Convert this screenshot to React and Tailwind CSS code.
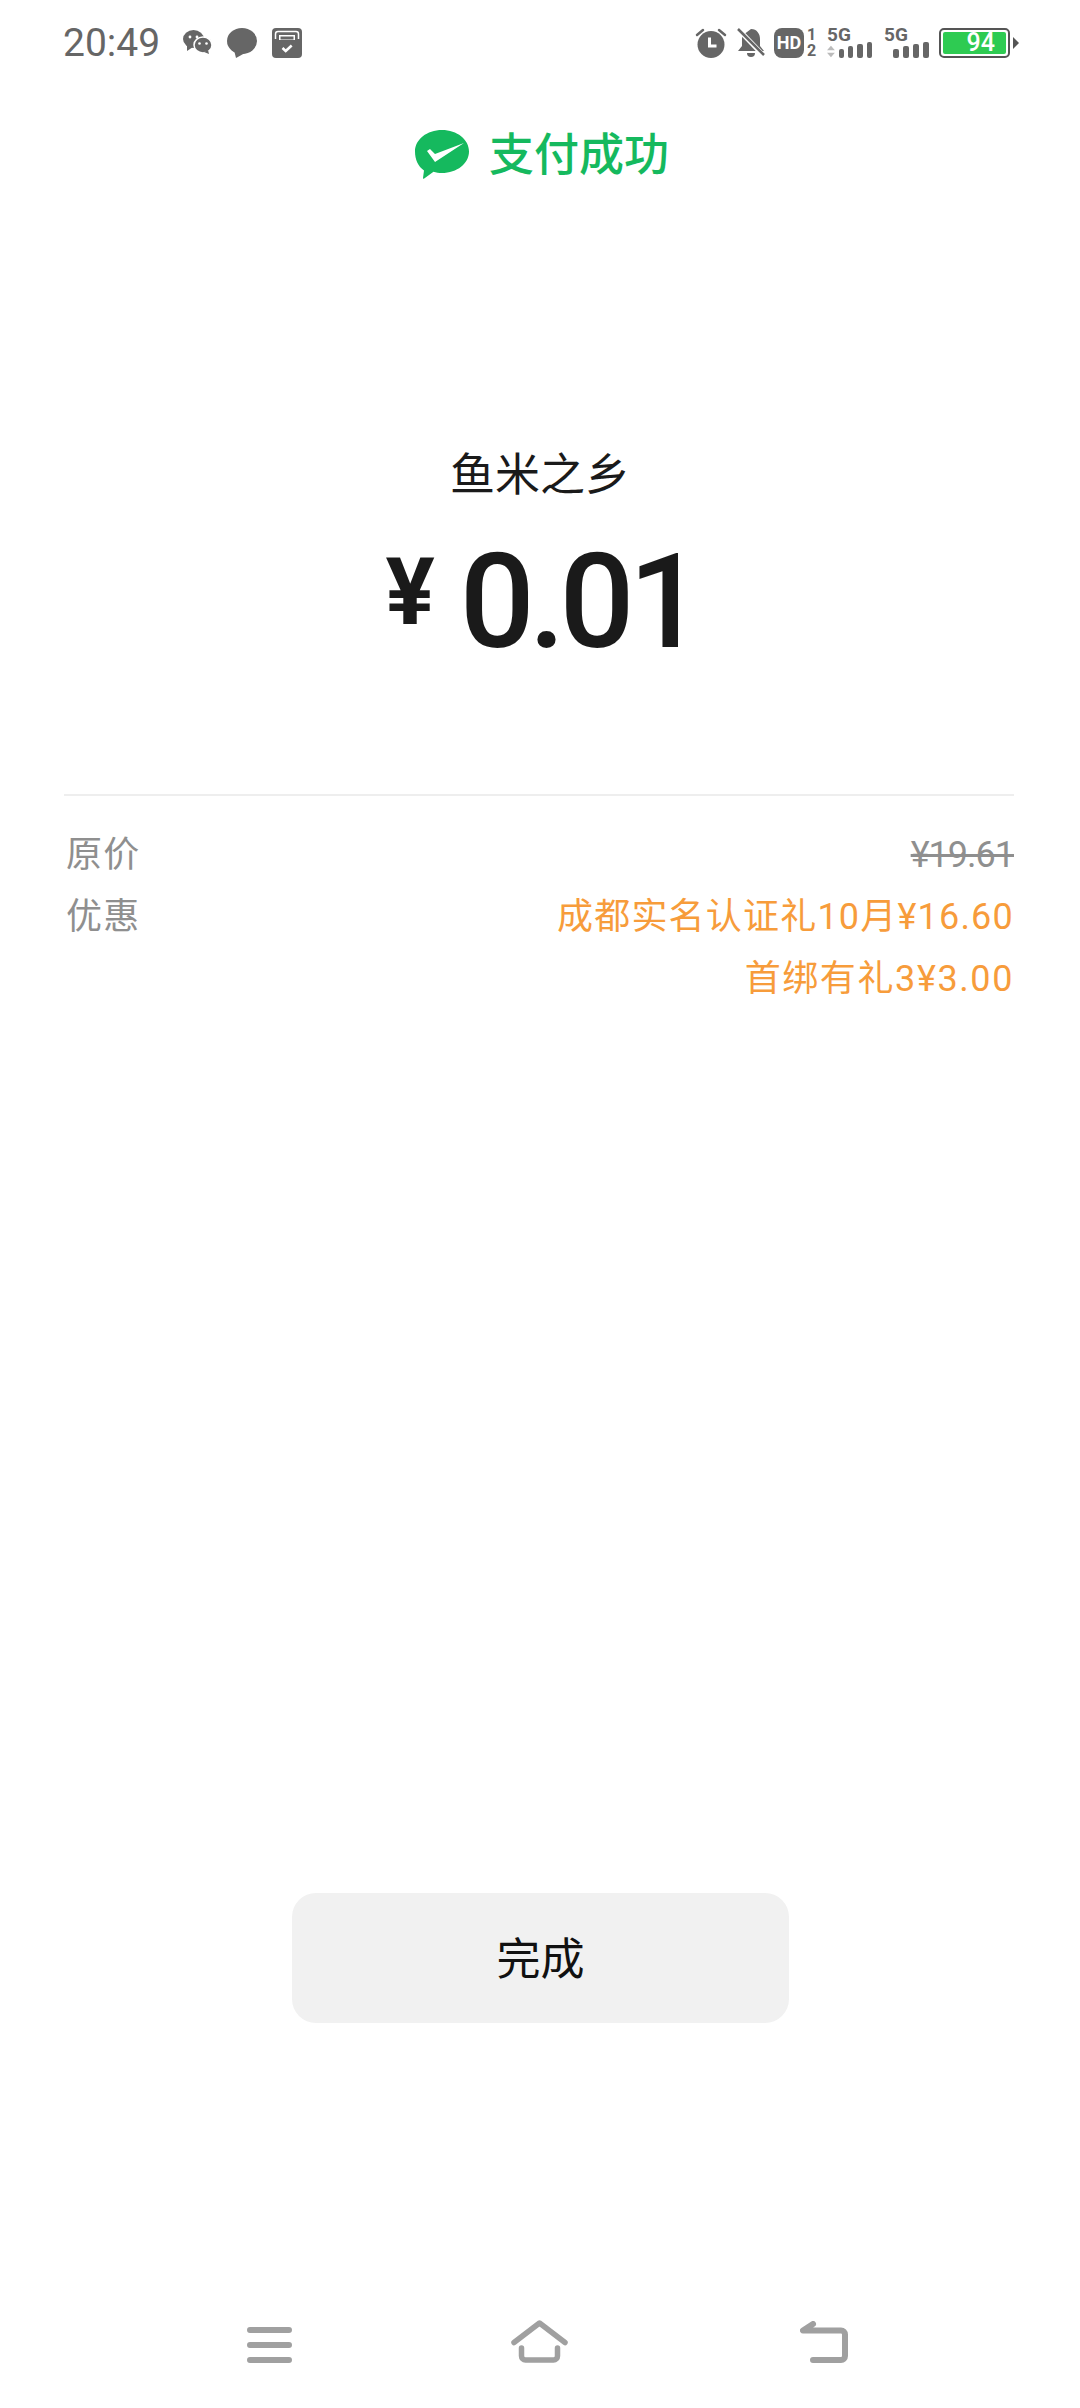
const cjk = "font-['Roboto','Noto_Sans_CJK_SC',sans-serif]";

function Bars() {
  return (
    <>
      <span className="h-[9px] w-[6px] rounded-[2px] bg-[#666]" />
      <span className="h-[12px] w-[6px] rounded-[2px] bg-[#666]" />
      <span className="h-[14px] w-[6px] rounded-[2px] bg-[#666]" />
      <span className="h-[16px] w-[6px] rounded-[2px] bg-[#666]" />
    </>
  );
}

function StatusBar() {
  return (
    <div className="flex h-[86px] items-center justify-between pb-[1px] pl-[63px] pr-[61px] text-[#666]">
      <div className="flex items-center">
        <span className="mt-[2px] w-[120px] text-[39px] leading-none">20:49</span>
        <svg width="29" height="24" viewBox="0 0 29 24" fill="#666" className="mt-[-1px]">
          <ellipse cx="10.5" cy="9" rx="10.5" ry="9" />
          <path d="M4 15l0 6 6-4z" />
          <ellipse cx="20" cy="15" rx="9" ry="8" stroke="#fff" strokeWidth="1.5" />
          <path d="M25 20l1 4-5-2z" />
          <circle cx="7" cy="7" r="1.4" fill="#fff" />
          <circle cx="14" cy="7" r="1.4" fill="#fff" />
          <circle cx="16.5" cy="13.5" r="1.3" fill="#fff" />
          <circle cx="23.5" cy="13.5" r="1.3" fill="#fff" />
        </svg>
        <svg width="30" height="30" viewBox="0 0 30 30" fill="#666" className="ml-[15px]">
          <ellipse cx="15" cy="13" rx="15" ry="13" />
          <path d="M7 22l2 8 9-5z" />
        </svg>
        <svg width="30" height="30" viewBox="0 0 30 30" className="ml-[15px]">
          <rect width="30" height="30" rx="4" fill="#666" />
          <path d="M3.500 11V6a2.500 2.500 0 0 1 2.500-2.500h18A2.500 2.500 0 0 1 26.500 6v5" fill="none" stroke="#fff" strokeWidth="1.500" />
          <rect x="7" y="7" width="16" height="5" fill="#fff" />
          <rect x="8.500" y="8.500" width="13" height="3" fill="#666" />
          <path d="M10.500 20l3.200 3 6-5.500" fill="none" stroke="#fff" strokeWidth="2.500" />
        </svg>
      </div>
      <div className="flex items-center">
        <svg width="32" height="32" viewBox="0 0 32 32" fill="#666">
          <circle cx="16" cy="17.500" r="13.500" />
          <path d="M2 8l6-5M30 8l-6-5" stroke="#666" strokeWidth="2.500" strokeLinecap="round" />
          <path d="M14.500 10.500v8.500h7" fill="none" stroke="#fff" strokeWidth="3" />
        </svg>
        <svg width="28" height="30" viewBox="0 0 28 30" fill="#666" className="ml-[10px]">
          <path d="M14 1c6 0 9 5 9 10v7l4 5H1l4-5v-7c0-1 0-3 1-4z" />
          <path d="M10 25h8a4 4 0 0 1-8 0z" />
          <path d="M0 0l27 28" stroke="#fff" strokeWidth="5" />
          <path d="M1 1l26 26" stroke="#666" strokeWidth="2.500" />
        </svg>
        <div className="ml-[9px] flex items-center">
          <span className="flex h-[30px] w-[30px] items-center justify-center rounded-[8px] bg-[#666] font-['Roboto'] text-[18px] font-bold leading-none text-white">
            HD
          </span>
          <span className="ml-[3px] flex w-[9px] flex-col items-center font-['Roboto'] text-[16px] font-bold leading-[16px]">
            <span>1</span>
            <span>2</span>
          </span>
        </div>
        <div className="ml-[11px] h-[30px] w-[45px]">
          <div className="font-['Roboto'] text-[19px] font-bold leading-[14px]">5G</div>
          <div className="flex items-end gap-[4px]">
            <svg width="9" height="13" viewBox="0 0 9 13" fill="#bbb">
              <path d="M4.500 0l4.500 5H0zM0 8h9l-4.500 5z" />
            </svg>
            <Bars />
          </div>
        </div>
        <div className="ml-[12px] h-[30px] w-[45px]">
          <div className="font-['Roboto'] text-[19px] font-bold leading-[14px]">5G</div>
          <div className="flex items-end justify-end gap-[4px]">
            <Bars />
          </div>
        </div>
        <div className="ml-[10px] h-[30px] w-[71px] rounded-[5px] border-2 border-[#555] p-[2px]">
          <div className="flex h-full items-center justify-end rounded-[2px] bg-[#2ecb52] pr-[11px] font-['Roboto'] text-[25px] font-medium leading-none text-white">
            94
          </div>
        </div>
        <svg width="6" height="12" viewBox="0 0 6 12" fill="#555" className="ml-[3px]">
          <path d="M0 0l6 6-6 6z" />
        </svg>
      </div>
    </div>
  );
}

function Logo() {
  return (
    <svg width="56" height="50" viewBox="0 0 56 50">
      <path
        d="M28 0c15 0 27 9.500 27 21.500S43 43 28 43c-3 0-6-.4-8.500-1.200L9.500 49l-.5-1 1-7.500C4 36.500 1 29.500 1 21.500 1 9.500 13 0 28 0z"
        fill="#15b95e"
      />
      <path d="M13 21l3-2 5 5 29-11-29 19z" fill="#fff" />
    </svg>
  );
}

function Row({ label, children }) {
  return (
    <div className="flex justify-between">
      <span className="pl-[2px] text-[#8f8f8f]">{label}</span>
      <div className="text-right">{children}</div>
    </div>
  );
}

export default function App() {
  return (
    <div className={`flex h-[2408px] w-[1080px] flex-col bg-white ${cjk}`}>
      <StatusBar />

      <div className="mt-[44px] flex h-[50px] items-center justify-center pl-[3px]">
        <Logo />
        <span className="ml-[19px] text-[45px] font-medium leading-none text-[#15b95e]">支付成功</span>
      </div>

      <div className="mt-[271px] text-center text-[45px] leading-[50px] text-[#1a1a1a]">鱼米之乡</div>

      <div className="mt-[41px] flex h-[120px] items-center justify-center pl-[3px] text-[#1a1a1a]">
        <span className="mb-[18px] text-[92px] font-bold leading-none">¥</span>
        <span className="ml-[25px] text-[132px] font-medium leading-none tracking-[-6px]">0.01</span>
      </div>

      <div className="ml-[64px] mr-[66px] mt-[132px] border-t-2 border-[#eeeeee] pt-[28px] text-[36px] leading-[62px] tracking-[1.2px]">
        <Row label="原价">
          <span className="tracking-[-1px] text-[#8f8f8f] line-through">¥19.61</span>
        </Row>
        <Row label="优惠">
          <div className="text-[#f79c3b]">成都实名认证礼10月¥16.60</div>
          <div className="tracking-[1.6px] text-[#f79c3b]">首绑有礼3¥3.00</div>
        </Row>
      </div>

      <div className="mt-auto flex justify-center">
        <button className="ml-[1px] h-[130px] w-[497px] rounded-[24px] bg-[#f1f1f1] pt-[4px] text-[44px] text-[#111]">
          完成
        </button>
      </div>

      <div className="mt-[297px] flex h-[88px] items-end pb-[45px] pl-[247px]">
        <svg width="45" height="36" viewBox="0 0 45 36" fill="none" stroke="#a0a0a0" strokeWidth="6" strokeLinecap="round">
          <path d="M3 3h39M3 18h39M3 33h39" />
        </svg>
        <svg width="57" height="43" viewBox="0 0 57 43" fill="none" stroke="#a0a0a0" strokeWidth="5.500" strokeLinecap="round" strokeLinejoin="round" className="ml-[219px]">
          <path d="M3 22.500L28.500 3 54 22.500" />
          <path d="M10.500 28v8a4 4 0 0 0 4 4h28a4 4 0 0 0 4-4v-8" />
        </svg>
        <svg width="48" height="42" viewBox="0 0 48 42" fill="none" stroke="#a0a0a0" strokeWidth="6" strokeLinecap="round" strokeLinejoin="round" className="ml-[232px]">
          <path d="M13 3L3 9.500h38a4 4 0 0 1 4 4V35a4 4 0 0 1-4 4H13" />
        </svg>
      </div>
    </div>
  );
}
